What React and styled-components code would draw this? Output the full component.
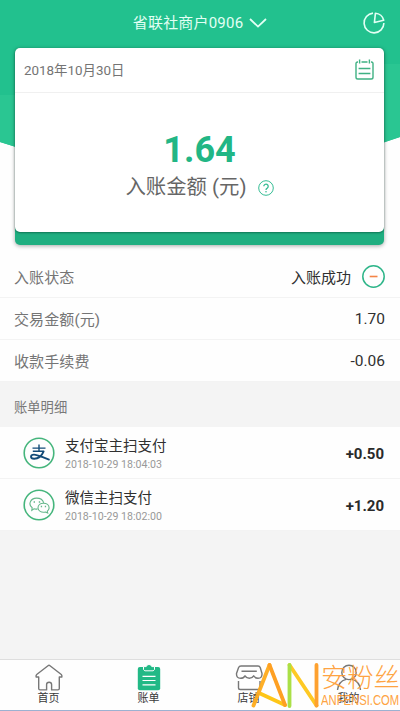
import styled, { createGlobalStyle } from "styled-components";

const GlobalStyle = createGlobalStyle`
  * {
    box-sizing: border-box;
  }
  body {
    margin: 0;
    font-family: Roboto, "Noto Sans CJK SC", sans-serif;
    color: #2b2b2b;
    background: #f4f4f4;
  }
`;

const details = [
  { id: 1, label: "入账状态", value: "入账成功", minus: true },
  { id: 2, label: "交易金额(元)", value: "1.70" },
  { id: 3, label: "收款手续费", value: "-0.06" },
];

const bills = [
  { id: 1, type: "alipay", title: "支付宝主扫支付", time: "2018-10-29 18:04:03", amount: "+0.50" },
  { id: 2, type: "wechat", title: "微信主扫支付", time: "2018-10-29 18:02:00", amount: "+1.20" },
];

const Screen = styled.div`
  position: relative;
  width: 400px;
  height: 711px;
  display: flex;
  flex-direction: column;
  overflow: hidden;
`;

const Hero = styled.section`
  position: relative;
  flex: none;
  height: 256px;
  background: #fefefe;
`;

const Wave = styled.svg`
  position: absolute;
  top: 0;
  left: 0;
`;

const Header = styled.header`
  position: relative;
  height: 48px;
  display: grid;
  grid-template-columns: 1fr auto 1fr;
  align-items: center;
  padding: 0 15px 3px;
  color: #e2fff4;
`;

const Merchant = styled.button`
  grid-column: 2;
  display: flex;
  align-items: center;
  gap: 6px;
  padding: 1px 0 0;
  border: none;
  background: none;
  color: inherit;
  font: 400 15px/20px Roboto, "Noto Sans CJK SC", sans-serif;
  letter-spacing: 0.2px;
`;

const HeaderAction = styled.span`
  justify-self: end;
  display: flex;
`;

const CardBase = styled.div`
  position: relative;
  width: 369px;
  height: 197px;
  margin-left: 15px;
  border-radius: 5px;
  background: #1fae80;
  box-shadow: 0 1px 4px rgba(0, 0, 0, 0.35);
`;

const Card = styled.div`
  height: 184px;
  border-radius: 5px;
  background: #fff;
  box-shadow: 0 1px 2px rgba(0, 60, 40, 0.5);
`;

const CardTop = styled.div`
  height: 45px;
  display: flex;
  justify-content: space-between;
  align-items: center;
  padding: 0 10px 2px 9px;
  border-bottom: 1px solid #f0f0f0;
  font-size: 13.4px;
  color: #747474;
`;

const CardBody = styled.div`
  display: flex;
  flex-direction: column;
  align-items: center;
  padding-top: 36px;
`;

const Total = styled.strong`
  font-size: 36px;
  line-height: 42px;
  font-weight: 700;
  color: #22b685;
`;

const TotalLabel = styled.span`
  display: flex;
  align-items: center;
  gap: 11px;
  margin-top: 2px;
  font-size: 20.4px;
  line-height: 29px;
  color: #666;
`;

const DetailRow = styled.div`
  flex: none;
  height: 42px;
  display: flex;
  justify-content: space-between;
  align-items: center;
  padding: 0 15px 0 14px;
  background: #fefefe;
  border-bottom: 1px solid #f3f3f3;
`;

const DetailLabel = styled.span`
  font-size: 15px;
  letter-spacing: 0.1px;
  color: #757575;
`;

const DetailValue = styled.span`
  display: flex;
  align-items: center;
  gap: 11px;
  font-size: ${(props) => (props.$status ? "15px" : "15.5px")};
  color: #303030;
`;

const SectionTitle = styled.h2`
  flex: none;
  height: 45px;
  margin: 0;
  padding: 5px 14px 0;
  font-size: 13.3px;
  line-height: 42px;
  font-weight: 400;
  color: #787878;
`;

const BillRow = styled.div`
  flex: none;
  height: 52px;
  display: flex;
  align-items: center;
  padding: 1px 16px 0 23px;
  background: #fefefe;
  border-bottom: 1px solid #f3f3f3;
`;

const BillText = styled.div`
  flex: 1;
  display: flex;
  flex-direction: column;
  margin-left: 10px;
  padding-top: 3px;
`;

const BillTitle = styled.span`
  font-size: 14.5px;
  line-height: 20px;
  color: #303030;
`;

const BillTime = styled.span`
  font-size: 10.6px;
  line-height: 16px;
  color: #999;
`;

const BillAmount = styled.strong`
  padding-top: 2px;
  font-size: 15px;
  font-weight: 700;
  color: #2a2a2a;
`;

const TabBar = styled.nav`
  height: 52px;
  margin-top: auto;
  display: grid;
  grid-template-columns: repeat(4, 1fr);
  background: #fefefe;
  border-top: 1px solid #dedede;
  border-bottom: 1px solid #9cb1d1;
`;

const Tab = styled.a`
  display: flex;
  flex-direction: column;
  align-items: center;
  padding: 4px 3px 0 0;
  font-size: 11px;
  line-height: 14px;
  color: #3a3a3a;
`;

const Watermark = styled.div`
  position: absolute;
  left: 250px;
  bottom: 0;
  display: flex;
  align-items: flex-start;
  height: 50px;
  color: #ff9f38;
  opacity: 0.95;
`;

const WatermarkText = styled.div`
  width: 79px;
  display: flex;
  flex-direction: column;
  white-space: nowrap;
`;

const WatermarkName = styled.span`
  margin-top: 4px;
  font-size: 26.3px;
  line-height: 27px;
  font-weight: 300;
`;

/* condensed so the address is as wide as the name over it */
const WatermarkSite = styled.span`
  align-self: flex-start;
  font: 400 15px/16px "Liberation Sans", sans-serif;
  transform: scaleX(0.75);
  transform-origin: left;
`;

const ChevronIcon = () => (
  <svg width="18" height="10" viewBox="0 0 18 10" fill="none" stroke="currentColor" strokeWidth="1.8">
    <path d="M1 1l8 7.6L17 1" />
  </svg>
);

const PieIcon = () => (
  <svg width="22" height="22" viewBox="0 0 22 22" fill="none" stroke="currentColor" strokeWidth="1.6">
    <path d="M10 1.1A9.900 9.900 0 1 0 20.900 11" />
    <path d="M12.400 1.300l-1 9.200 9.300-2.200a9 9 0 0 0-8.300-7z" strokeLinejoin="round" />
  </svg>
);

const CalendarIcon = () => (
  <svg width="19" height="21" viewBox="0 0 19 21" fill="none" stroke="#3fb183" strokeWidth="1.4">
    <path d="M3 3H2.6Q1 3 1 4.6v13.6q0 1.8 1.8 1.8h13.4q1.8 0 1.8-1.8V4.6Q18 3 16.4 3H16M6.500 3h6" />
    <path d="M4.6 .5v4M14.4 .5v4M3.6 9.500h11.8M3.6 14.500h11.8" />
  </svg>
);

const HelpIcon = () => (
  <svg width="16" height="16" viewBox="0 0 16 16" fill="none" stroke="#35bd94" strokeWidth="1">
    <circle cx="8" cy="8" r="7.3" />
    <path d="M5.8 6.3a2.2 2.2 0 1 1 3.5 1.8Q8 8.8 8 10" strokeWidth="1.3" />
    <circle cx="8" cy="11.8" r=".8" fill="#35bd94" stroke="none" />
  </svg>
);

const MinusIcon = () => (
  <svg width="23" height="23" viewBox="0 0 23 23" fill="none">
    <circle cx="11.5" cy="11.5" r="10.7" stroke="#2eb589" strokeWidth="1.5" />
    <path d="M7.7 11.5h7.8" stroke="#f48446" strokeWidth="1.6" />
  </svg>
);

const BillIcon = ({ type }) => (
  <svg width="32" height="32" viewBox="0 0 32 32" fill="none">
    <circle cx="16" cy="16" r="14.8" stroke="#45b57c" strokeWidth="1.6" />
    {type === "alipay" ? (
      <g stroke="#134b78" strokeWidth="1.4">
        <path d="M9.500 11.100h13M16 7.600v6.600M9.800 14.200h11.400" />
        <path d="M20.800 14.200c-1.800 4.200-5.600 7.600-9.600 7.600-4.300 0-4.100-4.200-.2-4.200 3.800 0 8 2.600 15.600 5.300" strokeWidth="1.900" />
      </g>
    ) : (
      <g stroke="#64b78a" strokeWidth="1.100">
        <path d="M14.500 19.900c-1.200.3-2.400.2-3.500-.1L8.800 21.400l.4-2.700C5 15.800 7 9.200 13.600 9.100c3.600 0 6.400 2 7.100 4.800" />
        <path d="M20.500 14.200c3.200 0 5.600 1.900 5.600 4.500 0 1.400-.7 2.600-1.800 3.400l.4 2-2.200-1.100c-4.300 1-7.500-1.200-7.500-4.300 0-2.600 2.400-4.500 5.500-4.500z" />
        <path d="M10.600 12.900h1.400M15.800 12.900h1.400M17.800 17.400h1.300M21.800 17.400h1.300" strokeWidth="1.500" />
      </g>
    )}
  </svg>
);

const HomeIcon = () => (
  <svg width="28" height="28" viewBox="0 0 28 28" fill="none" stroke="#777" strokeWidth="1.4" strokeLinejoin="round">
    <path d="M13 1.700Q14 .9 15 1.700L26.300 10.500q.8.700.6 2.500h-2.600v11.500q0 1.400-1.400 1.400h-6.300v-5.400q0-2.300-2.500-2.300t-2.500 2.300v5.400H5q-1.300 0-1.300-1.400V13H1.100q-.3-1.800.6-2.500z" />
  </svg>
);

const ClipboardIcon = () => (
  <svg width="24" height="28" viewBox="0 0 24 28" fill="none">
    <rect x=".8" y="3" width="22.400" height="23.300" rx="2" fill="#22b986" />
    <path d="M6.500 2.600h2.700a2.900 2.900 0 0 1 5.600 0h2.700v3l-1.400 1.200H7.900L6.500 5.600z" fill="#22b986" stroke="#fefefe" strokeWidth="1" />
    <path d="M5.500 12.300h13M5.500 16.500h13M5.500 20.900h13" stroke="#fff" strokeWidth="1.200" />
  </svg>
);

const StoreIcon = () => (
  <svg width="28" height="28" viewBox="0 0 28 28" fill="none" stroke="#777" strokeWidth="1.400" strokeLinejoin="round">
    <path d="M6 2h17q1.700 0 2.300 1.800L27 9.500q.3 4.800-4 4.800-3 0-4.300-2.500-1.500 2.500-4.400 2.500T10 11.800q-1.400 2.500-4.400 2.500-4.300 0-4.100-4.800l2-5.700Q4.200 2 6 2zM6.500 7.300h15.300" />
    <path d="M3.500 17v6.700q0 1.800 1.800 1.800h18q1.700 0 1.700-1.800V17" />
  </svg>
);

const UserIcon = () => (
  <svg width="28" height="28" viewBox="0 0 28 28" fill="none" stroke="#777" strokeWidth="1.400">
    <circle cx="14" cy="8.400" r="7.200" />
    <path d="M2.500 26c.5-5.500 4-9.400 8.600-10.600M17 15.400c4.700 1.200 8 5.100 8.500 10.600" />
  </svg>
);

const LogoMark = () => (
  <svg width="71" height="50" viewBox="0 0 71 50" fill="none" strokeWidth="3.800" strokeLinecap="round">
    <path d="M35 44L9 32" stroke="#ffc40b" />
    <path d="M19.500 4L3.500 44.500" stroke="#ffab1c" />
    <path d="M19.500 4L35 44" stroke="#ff9b18" />
    <path d="M39.500 4l27 40.500" stroke="#ffc719" />
    <path d="M39.500 4v41" stroke="#a6df3e" />
    <path d="M66.500 4v40.500" stroke="#ff9d24" />
  </svg>
);

const tabs = [
  { id: 1, title: "首页", Icon: HomeIcon },
  { id: 2, title: "账单", Icon: ClipboardIcon },
  { id: 3, title: "店铺", Icon: StoreIcon },
  { id: 4, title: "我的", Icon: UserIcon },
];

const App = () => {
  return (
    <Screen>
      <GlobalStyle />
      <Hero>
        <Wave width="400" height="170" viewBox="0 0 400 170">
          <path d="M0 0h400v137Q200 210 0 142z" fill="#22c18e" />
          <path d="M0 95h200V64h200v73Q200 210 0 142z" fill="#2ac692" />
        </Wave>
        <Header>
          <Merchant type="button">
            省联社商户0906
            <ChevronIcon />
          </Merchant>
          <HeaderAction>
            <PieIcon />
          </HeaderAction>
        </Header>
        <CardBase>
          <Card>
            <CardTop>
              2018年10月30日
              <CalendarIcon />
            </CardTop>
            <CardBody>
              <Total>1.64</Total>
              <TotalLabel>
                入账金额 (元)
                <HelpIcon />
              </TotalLabel>
            </CardBody>
          </Card>
        </CardBase>
      </Hero>
      {details.map((item) => (
        <DetailRow key={item.id}>
          <DetailLabel>{item.label}</DetailLabel>
          <DetailValue $status={item.minus}>
            {item.value}
            {item.minus && <MinusIcon />}
          </DetailValue>
        </DetailRow>
      ))}
      <SectionTitle>账单明细</SectionTitle>
      {bills.map((bill) => (
        <BillRow key={bill.id}>
          <BillIcon type={bill.type} />
          <BillText>
            <BillTitle>{bill.title}</BillTitle>
            <BillTime>{bill.time}</BillTime>
          </BillText>
          <BillAmount>{bill.amount}</BillAmount>
        </BillRow>
      ))}
      <TabBar>
        {tabs.map(({ id, title, Icon }) => (
          <Tab key={id}>
            <Icon />
            {title}
          </Tab>
        ))}
      </TabBar>
      <Watermark>
        <LogoMark />
        <WatermarkText>
          <WatermarkName>安粉丝</WatermarkName>
          <WatermarkSite>ANFENSI.COM</WatermarkSite>
        </WatermarkText>
      </Watermark>
    </Screen>
  );
};

export default App;
